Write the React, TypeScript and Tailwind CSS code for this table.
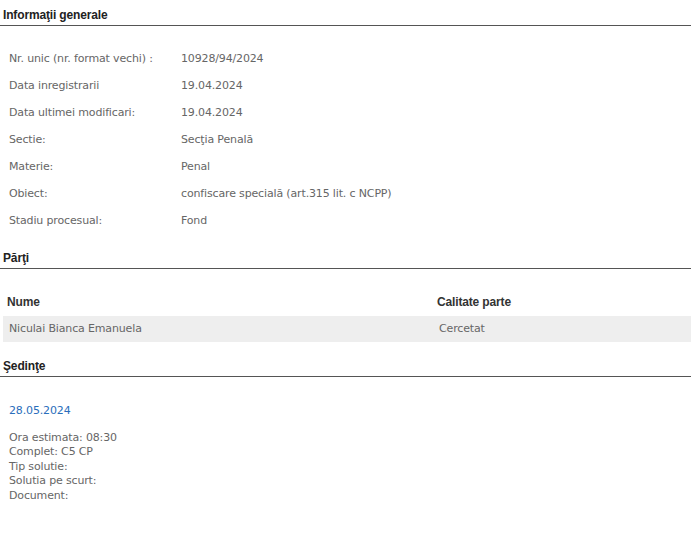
import React from "react";

const info: [string, string][] = [
  ["Nr. unic (nr. format vechi) :", "10928/94/2024"],
  ["Data inregistrarii", "19.04.2024"],
  ["Data ultimei modificari:", "19.04.2024"],
  ["Sectie:", "Secţia Penală"],
  ["Materie:", "Penal"],
  ["Obiect:", "confiscare specială (art.315 lit. c NCPP)"],
  ["Stadiu procesual:", "Fond"],
];

const sedinta = ["Ora estimata: 08:30", "Complet: C5 CP", "Tip solutie:", "Solutia pe scurt:", "Document:"];

function SectionTitle({ title, first }: { title: string; first?: boolean }) {
  return (
    <div
      className={`${first ? "" : "mt-[9px]"} h-[26px] border-b border-[#555] pl-[3px] pt-[8px] font-['Liberation_Sans',Arial,sans-serif] text-[12px] leading-[14px] font-bold tracking-[-0.15px] text-[#222]`}
    >
      {title}
    </div>
  );
}

export default function App() {
  return (
    <div className="w-[691px] bg-white font-['DejaVu_Sans',Tahoma,sans-serif] text-[11px] tracking-[-0.15px] text-[#666]">
      <SectionTitle title="Informaţii generale" first />
      <div className="mt-[19px]">
        {info.map(([k, v]) => (
          <div key={k} className="flex h-[27px] items-center pl-[9px] pt-[2px]">
            <div className="w-[172px]">{k}</div>
            <div>{v}</div>
          </div>
        ))}
      </div>

      <SectionTitle title="Părţi" />
      <div className="mt-[18px] ml-[3px]">
        <div className="flex h-[29px] items-center font-['Liberation_Sans',Arial,sans-serif] text-[12px] font-bold text-[#333]">
          <div className="w-[430px] pl-[4px]">Nume</div>
          <div className="pl-[4px]">Calitate parte</div>
        </div>
        <div className="flex h-[26px] items-center bg-[#eeeeee] pt-[1px]">
          <div className="w-[430px] pl-[6px]">Niculai Bianca Emanuela</div>
          <div className="pl-[6px]">Cercetat</div>
        </div>
      </div>

      <SectionTitle title="Şedinţe" />
      <div className="pl-[9px] pt-[27px]">
        <div className="text-[#2a6ebb] leading-[14px]">28.05.2024</div>
        <div className="mt-[13px] leading-[14.4px]">
          {sedinta.map((s) => (
            <div key={s}>{s}</div>
          ))}
        </div>
      </div>
    </div>
  );
}
